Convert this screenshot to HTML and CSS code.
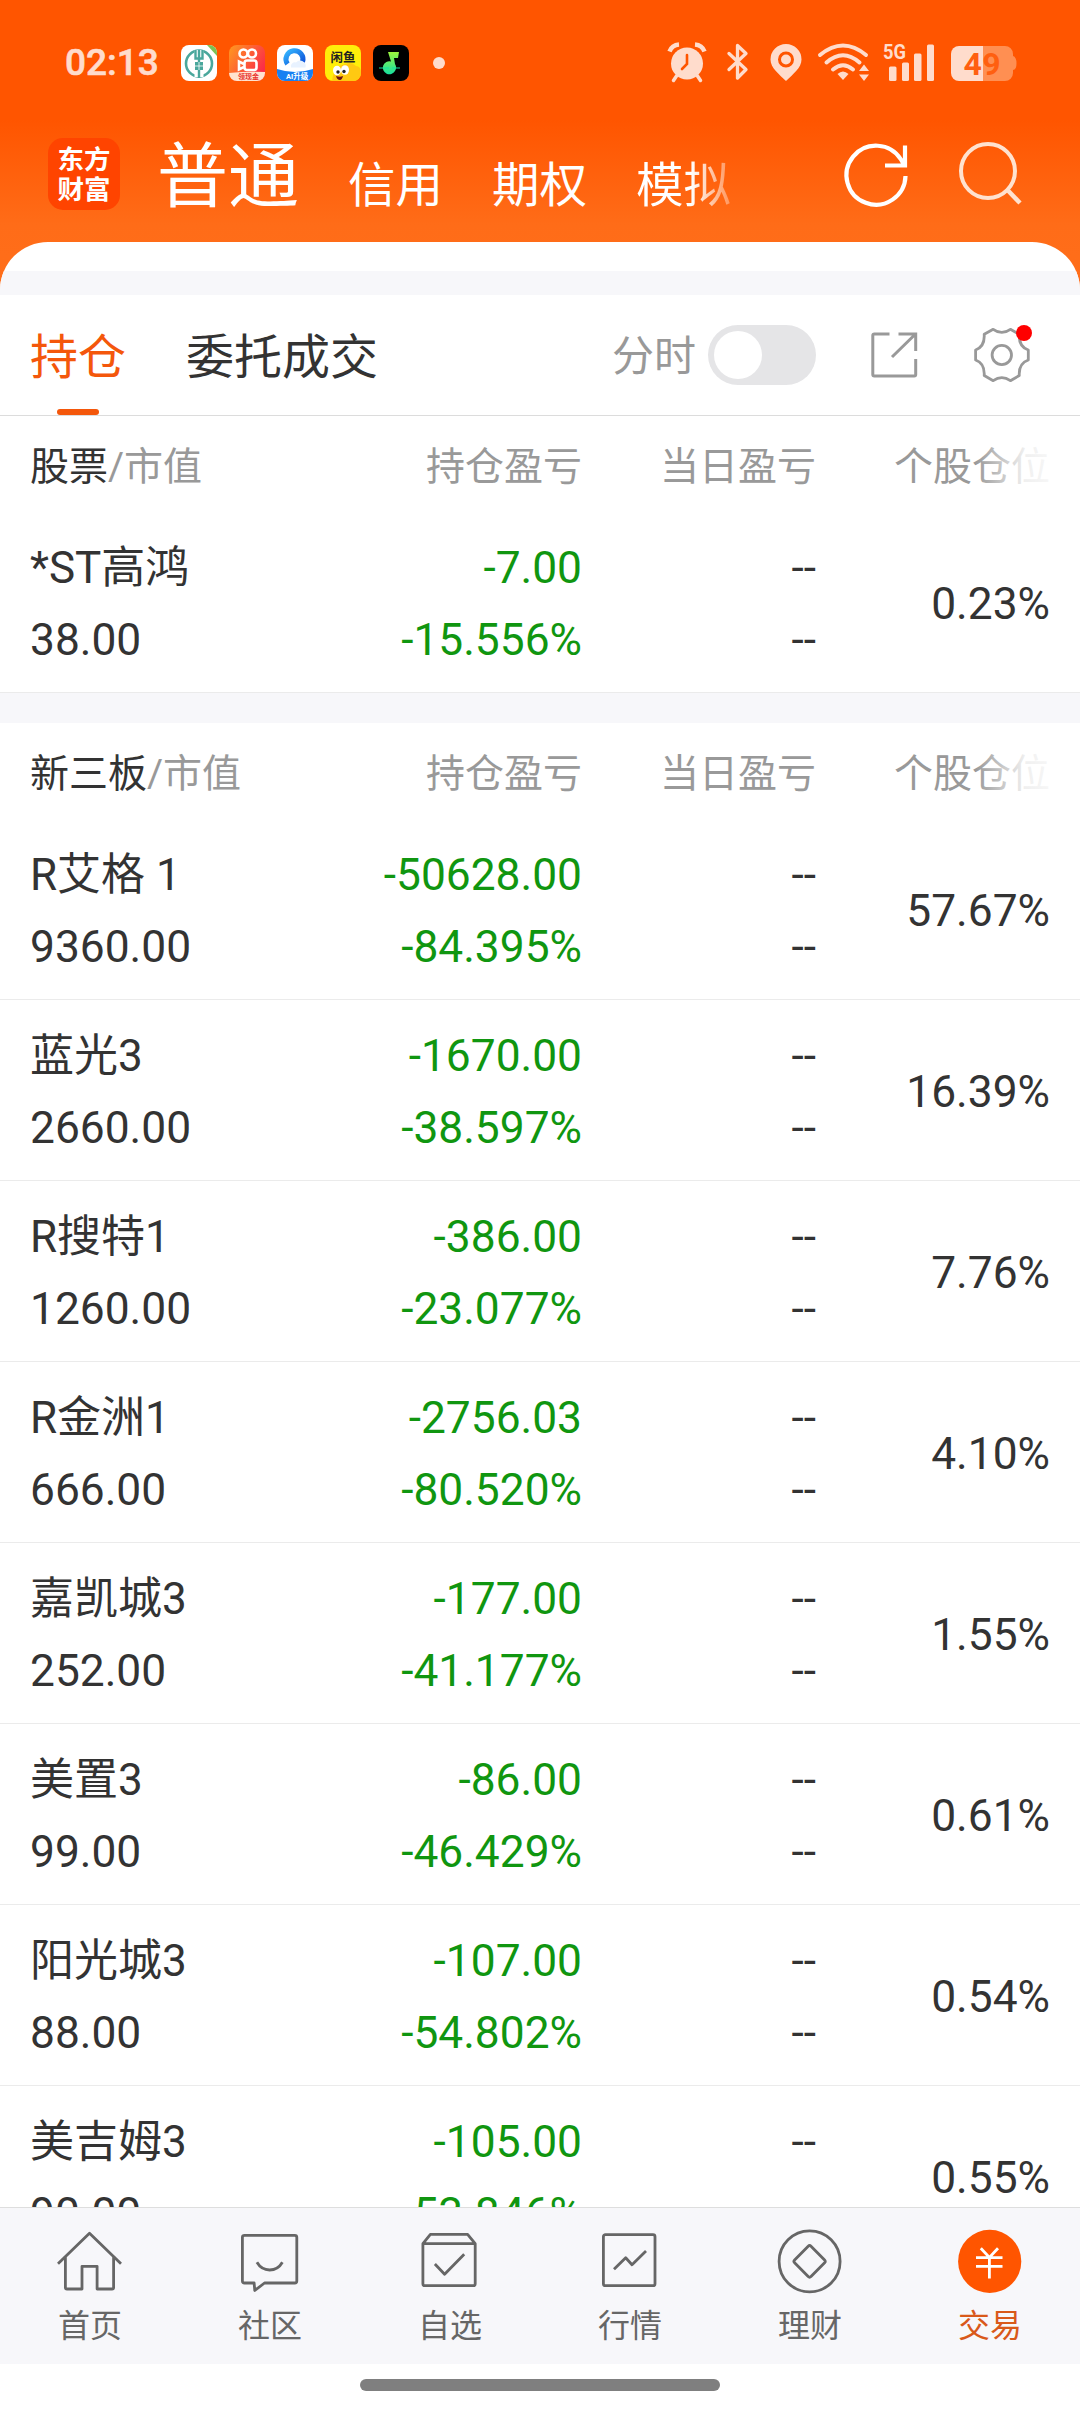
FILE: index.html
```html
<!DOCTYPE html>
<html lang="zh-CN">
<head>
<meta charset="utf-8">
<title>东方财富 - 交易</title>
<link rel="stylesheet" href="styles.css">
</head>
<body>
<div class="app">
  <header class="top">
    <div class="status">
      <span class="clock">02:13</span>
      <div class="notices">
        <svg class="app-icon" viewBox="0 0 36 36"><rect width="36" height="36" rx="8" fill="#fff"/><path d="M26 0h2a8 8 0 0 1 8 8v3z" fill="#7cc255"/><circle cx="18" cy="18.500" r="13" fill="none" stroke="#4aa79c" stroke-width="2.600"/><path d="M18 5v27" stroke="#fff" stroke-width="9"/><path d="M18 13v20M14.500 5v8.500h7V5M18 5v8" fill="none" stroke="#4aa79c" stroke-width="2.400"/><path d="M14 17h8v8h-8z" fill="#4aa79c"/><path d="M14 21h8M18 17v8" stroke="#fff" stroke-width=".8"/></svg>
        <svg class="app-icon" viewBox="0 0 36 36"><defs><linearGradient id="ks" x1="0" y1="0" x2="1" y2=".6"><stop offset="0" stop-color="#ff9a1f"/><stop offset="1" stop-color="#fb2c49"/></linearGradient></defs><rect width="36" height="36" rx="8" fill="url(#ks)"/><path d="M0 28q18-2 36-1v1a8 8 0 0 1-8 8H8a8 8 0 0 1-8-8z" fill="#ffe3cf"/><g fill="none" stroke="#fff" stroke-width="2.600"><circle cx="14.500" cy="8.500" r="4"/><circle cx="23" cy="8.500" r="4"/><rect x="15.500" y="15.500" width="12" height="9.500" rx="2.500"/><path d="M15 19l-5-2.500v8l5-2.500"/></g><text x="9" y="34" font-size="7" font-weight="700" fill="#e8342f">领现金</text></svg>
        <svg class="app-icon" viewBox="0 0 36 36"><defs><linearGradient id="qb" x1="0" y1="0" x2="1" y2="1"><stop offset="0" stop-color="#35b6ff"/><stop offset="1" stop-color="#0b4fd8"/></linearGradient></defs><rect width="36" height="36" rx="8" fill="#fff"/><path d="M0 24q18 6 36 0v4a8 8 0 0 1-8 8H8a8 8 0 0 1-8-8z" fill="#1680f2"/><path d="M10.500 19A8.500 8.500 0 1 1 25.500 17" fill="none" stroke="url(#qb)" stroke-width="5"/><path d="M14 22.500a4 4 0 0 1 5-5 5.500 5.500 0 0 1 9.500 5z" fill="#e8f2ff"/><text x="9" y="34" font-size="7.500" font-weight="700" fill="#fff">AI升级</text></svg>
        <svg class="app-icon" viewBox="0 0 36 36"><rect width="36" height="36" rx="8" fill="#ffee0a"/><path d="M7 36q2-16 14-17 5-3 10 2 5 0 5 7a8 8 0 0 1-8 8z" fill="#ffc912"/><text x="5.500" y="16.500" font-size="12.500" font-weight="700" fill="#222" textLength="25">闲鱼</text><ellipse cx="12" cy="25.500" rx="4" ry="4.800" fill="#fff"/><ellipse cx="20" cy="25" rx="4" ry="4.800" fill="#fff"/><circle cx="13" cy="27" r="1.700" fill="#222"/><circle cx="19" cy="26.500" r="1.700" fill="#222"/><path d="M11 31q4 1.500 7 0-1 4-3 4-3 0-4-4" fill="#6d1310"/></svg>
        <svg class="app-icon" viewBox="0 0 36 36"><defs><linearGradient id="qm" x1="0" y1="0" x2="0" y2="1"><stop offset="0" stop-color="#9cf43d"/><stop offset="1" stop-color="#16e0a0"/></linearGradient></defs><rect width="36" height="36" rx="8" fill="#000"/><path d="M15 7h11l-1 6h-4l1 6a6.500 6.500 0 0 1 0 7 6.500 6.500 0 1 1-4-9.500z" fill="url(#qm)"/><path d="M6 23h10M19 23h8" stroke="#16e0a0" stroke-width="1.200"/></svg>
        <i class="more"></i>
      </div>
      <div class="system">
        <svg class="alarm" viewBox="0 0 38 40"><circle cx="19" cy="21.500" r="16" fill="currentColor"/><path d="M8.500 34l-3 4.500M29.500 34l3 4.500" stroke="currentColor" stroke-width="3.500" stroke-linecap="round"/><path d="M1.500 9.500A11 11 0 0 1 11 2.500M36.500 9.500A11 11 0 0 0 27 2.500" fill="none" stroke="currentColor" stroke-width="4.500"/><path d="M19 13v9l-5 5" fill="none" stroke="#ff5500" stroke-width="2.600" stroke-linecap="round"/></svg>
        <svg class="bt" viewBox="0 0 22 40"><path d="M2 11.500l17 16-8.500 8.500V3.500L19 11.500l-17 16" fill="none" stroke="currentColor" stroke-width="3.300" stroke-linejoin="round" stroke-linecap="round"/></svg>
        <svg class="pin" viewBox="0 0 32 40"><path d="M16 2a15.500 15.500 0 0 1 15.500 15.500C31.500 26 23 32 16 39 9 32 .5 26 .5 17.500A15.500 15.500 0 0 1 16 2z" fill="currentColor"/><circle cx="16" cy="17.500" r="6.500" fill="none" stroke="#ff5500" stroke-width="3"/></svg>
        <svg class="wifi" viewBox="0 0 51 40"><g fill="none" stroke="currentColor" stroke-width="4" stroke-linecap="round"><path d="M2 13Q25 -6 48 13M8.500 20.500Q25 6 41.500 20.500M15 27.500Q25 19 35 27.500"/></g><path d="M19.500 32q5.500-5 11 0L25 38z" fill="currentColor"/><path d="M46 22.500l5 6.500h-10zM46 39l5-6.500h-10z" fill="currentColor"/></svg>
        <svg class="signal" viewBox="0 0 52 40"><text x="0" y="17" font-size="21" font-weight="700" fill="currentColor" textLength="23" lengthAdjust="spacingAndGlyphs">5G</text><g fill="currentColor"><rect x="6" y="24.500" width="7.500" height="14.500" rx="1.500"/><rect x="19" y="20.500" width="7" height="18.500" rx="1.500"/><rect x="31" y="11.500" width="7.500" height="27.500" rx="1.500"/><rect x="44" y="2.500" width="7" height="36.500" rx="1.500"/></g></svg>
        <svg class="battery" viewBox="0 0 67 40"><path d="M33 4h22a8 8 0 0 1 8 8v2q3.500 1 3.500 7.500T63 28v3a8 8 0 0 1-8 8H33z" fill="#ff8f52"/><path d="M33 4H9a8 8 0 0 0-8 8v19a8 8 0 0 0 8 8h24z" fill="currentColor"/><text x="13.500" y="33" font-size="32" font-weight="700" fill="#ff5f10" textLength="37">49</text></svg>
      </div>
    </div>
    <nav class="accounts">
      <div class="logo">东方<br>财富</div>
      <div class="kinds"><b>普通</b><span>信用</span><span>期权</span><span class="fading">模拟</span></div>
      <svg class="refresh" viewBox="0 0 68 68"><path d="M63.500 35A29.500 29.500 0 1 1 59 18.500L62.500 24.500M63 4.500V24.500H43" fill="none" stroke="#fff" stroke-width="4.200"/></svg>
      <svg class="search" viewBox="0 0 66 68"><circle cx="31" cy="30" r="27" fill="none" stroke="#ffe2cf" stroke-width="4"/><path d="M50 48.500L63 62" stroke="#ffe2cf" stroke-width="4.500"/></svg>
    </nav>
  </header>

  <main class="sheet">
    <div class="strip"></div>
    <div class="tabs">
      <span class="tab active">持仓</span>
      <span class="tab">委托成交</span>
      <span class="toggle-label">分时</span>
      <span class="toggle"><i></i></span>
      <svg class="share" viewBox="0 0 48 48"><path d="M19.500 3H4.300Q2.800 3 2.800 4.500V43.500Q2.800 45 4.300 45H44.200Q45.700 45 45.700 43.500V28M28.500 3H45.700V20M22 26L45 3.500" fill="none" stroke="#999" stroke-width="3"/></svg>
      <span class="settings">
        <svg viewBox="0 0 56 56"><path d="M19.200 2.300Q27.800 8.500 36.400 2.300L45.300 7.300Q44.500 19.500 54.300 23V33Q44.500 36.500 45.300 48.500L36.400 53.700Q27.800 47.500 19.200 53.700L10.200 48.500Q11 36.500 1.600 33V23Q11 19.500 10.200 7.300Z" fill="none" stroke="#999" stroke-width="2.800" stroke-linejoin="round"/><circle cx="27.800" cy="28" r="9.700" fill="none" stroke="#999" stroke-width="2.800"/></svg>
        <i class="dot"></i>
      </span>
    </div>

    <section class="group">
      <div class="head"><span><b>股票</b>/市值</span><span>持仓盈亏</span><span>当日盈亏</span><span>个股仓位</span></div>
      <div class="row"><div><span class="name">*ST高鸿</span><span>38.00</span></div><div class="loss"><span>-7.00</span><span>-15.556%</span></div><div><span>--</span><span>--</span></div><div>0.23%</div></div>
    </section>
    <div class="gap"></div>
    <section class="group">
      <div class="head"><span><b>新三板</b>/市值</span><span>持仓盈亏</span><span>当日盈亏</span><span>个股仓位</span></div>
      <div class="row"><div><span class="name">R艾格 1</span><span>9360.00</span></div><div class="loss"><span>-50628.00</span><span>-84.395%</span></div><div><span>--</span><span>--</span></div><div>57.67%</div></div>
      <div class="row"><div><span class="name">蓝光3</span><span>2660.00</span></div><div class="loss"><span>-1670.00</span><span>-38.597%</span></div><div><span>--</span><span>--</span></div><div>16.39%</div></div>
      <div class="row"><div><span class="name">R搜特1</span><span>1260.00</span></div><div class="loss"><span>-386.00</span><span>-23.077%</span></div><div><span>--</span><span>--</span></div><div>7.76%</div></div>
      <div class="row"><div><span class="name">R金洲1</span><span>666.00</span></div><div class="loss"><span>-2756.03</span><span>-80.520%</span></div><div><span>--</span><span>--</span></div><div>4.10%</div></div>
      <div class="row"><div><span class="name">嘉凯城3</span><span>252.00</span></div><div class="loss"><span>-177.00</span><span>-41.177%</span></div><div><span>--</span><span>--</span></div><div>1.55%</div></div>
      <div class="row"><div><span class="name">美置3</span><span>99.00</span></div><div class="loss"><span>-86.00</span><span>-46.429%</span></div><div><span>--</span><span>--</span></div><div>0.61%</div></div>
      <div class="row"><div><span class="name">阳光城3</span><span>88.00</span></div><div class="loss"><span>-107.00</span><span>-54.802%</span></div><div><span>--</span><span>--</span></div><div>0.54%</div></div>
      <div class="row"><div><span class="name">美吉姆3</span><span>90.00</span></div><div class="loss"><span>-105.00</span><span>-53.846%</span></div><div><span>--</span><span>--</span></div><div>0.55%</div></div>
    </section>
  </main>

  <nav class="bottom">
    <a class="item"><svg viewBox="0 0 66 66"><path d="M1 34.700L32.500 4.200L64 34.700M8.400 28V58.500Q8.400 60 10 60H25V37.300H40.100V60H55Q56.600 60 56.600 58.500V28"/></svg>首页</a>
    <a class="item"><svg viewBox="0 0 66 66"><path d="M7.500 6.300H57.800Q59.800 6.300 59.800 8.300V52Q59.800 54 57.800 54H27.500L17.800 61.500L17.100 54H7.500Q5.400 54 5.400 52V8.300Q5.400 6.300 7.500 6.300ZM19.900 33.300Q24.500 41 32.600 41Q41 41 45.400 33.300"/></svg>社区</a>
    <a class="item"><svg viewBox="0 0 66 66"><path d="M5.900 14.700L13.400 5.300H50.600L58.200 14.700V54.700Q58.200 56.700 56.200 56.700H7.900Q5.900 56.700 5.900 54.700ZM5.900 14.700H58.200M17.900 35L27.600 45.300L47.200 25.300"/></svg>自选</a>
    <a class="item"><svg viewBox="0 0 66 66"><rect x="6.400" y="5.700" width="51.600" height="51" rx="2"/><path d="M17 40.300L28.700 28.700L35 35.700L49 22"/></svg>行情</a>
    <a class="item"><svg viewBox="0 0 66 66"><circle cx="32.600" cy="32.400" r="30.500"/><path d="M34 17.200L47.600 31Q49 32.400 47.600 33.800L34 47.600Q32.600 49 31.200 47.600L17.600 33.800Q16.200 32.400 17.600 31L31.200 17.200Q32.600 15.800 34 17.200Z"/></svg>理财</a>
    <a class="item current"><svg viewBox="0 0 66 66"><circle class="disc" cx="32.700" cy="32.400" r="31.600"/><path class="yuan" d="M23.800 19.300L32.400 28.500L41 19.300M32.400 28.500V49.500M19 28.700H45.500M19 37.300H45.500"/></svg>交易</a>
  </nav>
  <div class="gesture"><i></i></div>
</div>
</body>
</html>
```

FILE: styles.css
```css
* { box-sizing: border-box; }

body {
  margin: 0;
  background: #fff;
  color: #333;
  font-family: Roboto, "Noto Sans CJK SC", sans-serif;
}

i { font-style: normal; }
b { font-weight: 400; }
svg { display: block; flex: none; overflow: visible; }

.app {
  width: 1080px;
  height: 2412px;
  display: flex;
  flex-direction: column;
  overflow: hidden;
}

/* Orange header */
.top {
  flex: none;
  height: 290px;
  background: linear-gradient(#ff5500 0, #ff5500 120px, #ff6c18 225px, #ff6e1a 290px);
}

.status {
  height: 124px;
  padding: 0 63px 0 65px;
  display: flex;
  align-items: center;
  color: #ffdccc;
}

.clock {
  width: 116px;
  font-size: 37px;
  font-weight: 500;
  -webkit-text-stroke: .6px currentColor;
}

.notices { display: flex; align-items: center; gap: 12px; padding-top: 1px; }
.app-icon { width: 36px; height: 36px; }
.more {
  width: 12px;
  height: 12px;
  margin-left: 12px;
  border-radius: 50%;
  background: currentColor;
}

.system { display: flex; margin-left: auto; }
.system svg { height: 40px; }
.alarm { width: 38px; margin-right: 21px; }
.bt { width: 22px; margin-right: 21px; }
.pin { width: 32px; margin-right: 16px; }
.wifi { width: 51px; margin-right: 14px; }
.signal { width: 52px; margin-right: 15px; }
.battery { width: 67px; }

.accounts {
  height: 118px;
  padding: 14px 57px 0 48px;
  display: flex;
  align-items: flex-start;
  color: #fff;
}

.logo {
  width: 72px;
  height: 72px;
  padding-top: 7px;
  border-radius: 15px;
  background: #ff4400;
  font-size: 26.5px;
  line-height: 30px;
  font-weight: 700;
  text-align: center;
}

.kinds {
  display: flex;
  align-items: baseline;
  gap: 49px;
  margin: 4px auto 0 37px;
  font-size: 47.5px;
  line-height: 72px;
}
.kinds b { font-size: 71px; line-height: 70px; }
.kinds span { position: relative; top: 1px; }
.fading {
  background: linear-gradient(90deg, #fff 58%, rgba(255, 255, 255, .3) 100%);
  -webkit-background-clip: text;
  background-clip: text;
  color: transparent;
}

.refresh { width: 68px; height: 68px; margin: 3px 47px 0 0; }
.search { width: 66px; height: 68px; margin-top: 3px; }

/* White sheet */
.sheet {
  flex: 1;
  min-height: 0;
  margin-top: -48px;
  border-radius: 48px 48px 0 0;
  background: #fff;
  overflow: hidden;
}

.strip { height: 24px; margin-top: 29px; background: #f7f7fa; }

.tabs {
  height: 121px;
  padding: 0 50px 0 30px;
  display: flex;
  align-items: center;
  border-bottom: 1px solid #dcdcdc;
}
.tab {
  position: relative;
  height: 120px;
  margin-right: 60px;
  padding-top: 3px;
  font-size: 48px;
  line-height: 120px;
}
.active { color: #f4570b; }
.active::after {
  content: "";
  position: absolute;
  left: 27px;
  bottom: 0;
  width: 42px;
  height: 6px;
  border-radius: 3px;
  background: #f4570b;
}
.toggle-label { margin: 4px 12px 0 auto; color: #999; font-size: 42px; line-height: 60px; }
.toggle {
  width: 108px;
  height: 60px;
  padding: 6px;
  margin-right: 54px;
  border-radius: 30px;
  background: #e5e5e7;
}
.toggle i { display: block; width: 48px; height: 48px; border-radius: 50%; background: #fff; }
.share { width: 48px; height: 48px; margin-right: 56px; }
.settings { position: relative; width: 56px; height: 56px; }
.dot {
  position: absolute;
  top: -2px;
  right: -2px;
  width: 16px;
  height: 16px;
  border-radius: 50%;
  background: #f00;
}

/* Holdings */
.head, .row {
  display: grid;
  grid-template-columns: 300px 252px 234px 234px;
  padding: 0 30px;
  text-align: right;
}
.head {
  position: relative;
  height: 96px;
  padding-top: 3px;
  color: #999;
  font-size: 39px;
  line-height: 96px;
}
.head b { color: #333; }
.head::after {
  content: "";
  position: absolute;
  right: 0;
  top: 0;
  width: 110px;
  height: 96px;
  background: linear-gradient(90deg, rgba(255, 255, 255, 0) 5%, rgba(255, 255, 255, .85) 50%, #fff);
}
.head > :first-child, .row > :first-child { text-align: left; }

.row {
  height: 181px;
  padding-top: 4px;
  align-items: center;
  border-bottom: 1px solid #ebebeb;
  font-size: 44.3px;
  line-height: 72px;
}
.row span { display: block; }
.name { font-size: 44px; }
.loss { color: #109610; }

.gap { height: 30px; background: #f7f7fa; }

/* Bottom bar */
.bottom {
  flex: none;
  height: 157px;
  display: grid;
  grid-template-columns: repeat(6, 1fr);
  border-top: 1px solid #dedede;
  background: #f7f7fa;
}
.item {
  padding-top: 21px;
  display: flex;
  flex-direction: column;
  align-items: center;
  gap: 11px;
  color: #666;
  font-size: 32px;
  line-height: 40px;
}
.item svg {
  width: 66px;
  height: 66px;
  fill: none;
  stroke: currentColor;
  stroke-width: 2.8px;
  stroke-linejoin: round;
}
.current { color: #d9591a; }
.current .disc { fill: #ff5500; stroke: none; }
.current .yuan { stroke: #fff; stroke-linejoin: miter; }

.gesture { flex: none; height: 48px; padding-top: 15px; background: #fff; }
.gesture i { display: block; width: 360px; height: 12px; margin: 0 auto; border-radius: 6px; background: #7f7f7f; }
```
